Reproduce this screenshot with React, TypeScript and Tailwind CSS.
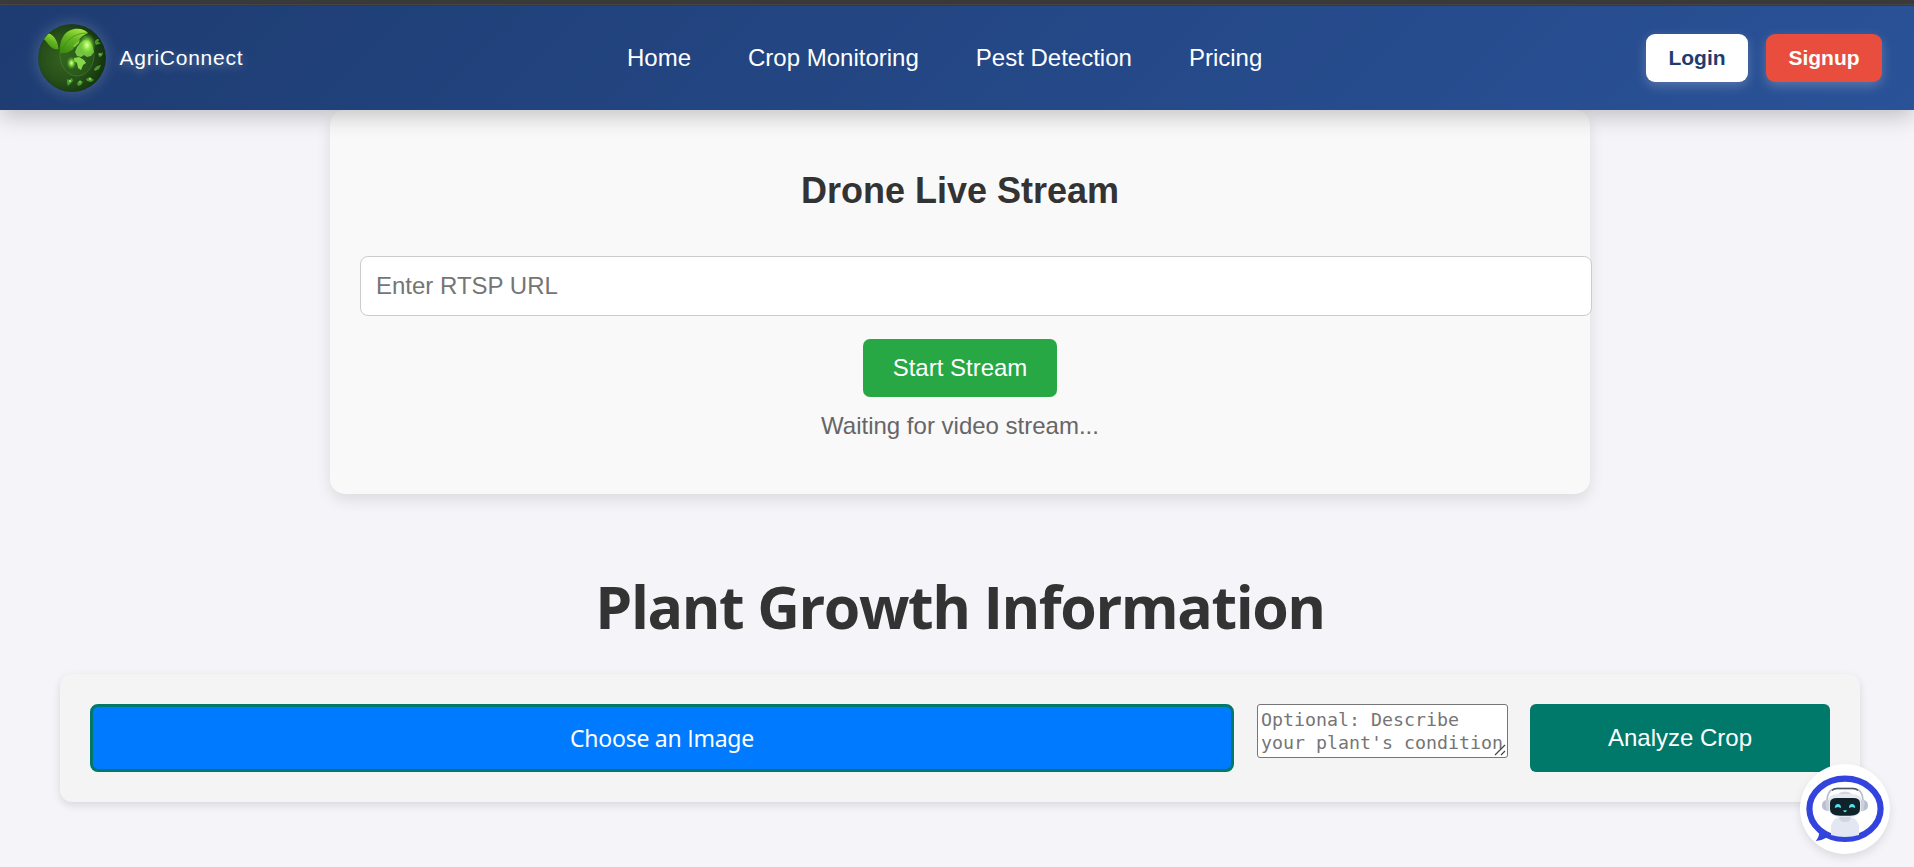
const navLinks = ["Home", "Crop Monitoring", "Pest Detection", "Pricing"];

function Logo() {
  return (
    <svg viewBox="0 0 68 68" className="size-[68px] rounded-full shadow-[0_0_15px_rgba(255,255,255,0.22)]">
      <defs>
        <radialGradient id="globe-bg" cx="40%" cy="50%" r="62%">
          <stop offset="0" stopColor="#366320" />
          <stop offset="0.55" stopColor="#27501a" />
          <stop offset="1" stopColor="#12300c" />
        </radialGradient>
        <linearGradient id="leaf" x1="0.2" y1="1" x2="0.7" y2="0">
          <stop offset="0" stopColor="#3f8a12" />
          <stop offset="0.55" stopColor="#63b520" />
          <stop offset="1" stopColor="#a2e444" />
        </linearGradient>
        <radialGradient id="glow">
          <stop offset="0" stopColor="#f0ffb0" />
          <stop offset="0.35" stopColor="#98f04c" stopOpacity="0.85" />
          <stop offset="1" stopColor="#4fb020" stopOpacity="0" />
        </radialGradient>
        <clipPath id="disc"><circle cx="34" cy="34" r="34" /></clipPath>
      </defs>
      <g clipPath="url(#disc)">
        <rect width="68" height="68" fill="url(#globe-bg)" />
        <ellipse cx="39" cy="31" rx="17" ry="21" fill="#2f681c" fillOpacity="0.35" stroke="#4f8a35" strokeWidth="0.9" strokeOpacity="0.6" />
        <path d="M5 14C7 9 11 8 15 12C19 16 20 21 20.5 25C14 27 11 20 5 14Z" fill="url(#leaf)" />
        <path d="M22 29C21 18 25 7 36 5C43 4 47 6 50 9C43 12 41 15 38 21C35 27 29 30 22 29Z" fill="url(#leaf)" />
        <path d="M23 28C28 17 35 9 49 9" stroke="#3f8d15" strokeWidth="0.7" fill="none" />
        <path d="M39 23l3-4 4-3 5 1 3 4 2 7-3 4-4 1-3-2-3 2-4-1-2-4z" fill="#8ade4b" fillOpacity="0.8" />
        <path d="M36 34l5-1 5 3 2 3-3 2-2 5-3-2-1-5-3-2z" fill="#86d84b" />
        <path d="M39 18l3-3-1 4-4 4-2-1z" fill="#7acb43" />
        <ellipse cx="49" cy="21" rx="9" ry="12" fill="url(#glow)" />
        <ellipse cx="33.5" cy="39" rx="5" ry="6.5" fill="url(#glow)" />
        <g fill="#57b434" fillOpacity="0.75">
          <path d="M57 17l2-2 1 3 3 1-2 1-3 1-1-2zM60 29l2 1 3-2-1 4-3 1zM56 45l3-3 4-1-2 4-4 2z" />
          <path d="M29 55l2 1 3-2 1 3-3 3-2 2-1-3zM39 59l3-3 3 2-2 3-3 1zM48 55l4-2 4 3-3 2-4-1z" />
        </g>
        <g fill="#a0ed69">
          <circle cx="60" cy="16" r="0.7" /><circle cx="62" cy="30" r="0.8" /><circle cx="32" cy="57" r="1" /><circle cx="42" cy="58" r="0.8" /><circle cx="52" cy="55" r="0.9" />
        </g>
      </g>
    </svg>
  );
}

function RobotIcon() {
  return (
    <svg viewBox="0 0 90 90" className="size-[90px]">
      <path d="M19 66Q20 72 15.8 77Q22 76.500 28 73Z" fill="#3343dd" />
      <ellipse cx="45" cy="44.800" rx="35.600" ry="30.100" fill="#fff" stroke="#3343dd" strokeWidth="6.200" />
      <path d="M31 71V64Q31 54 41 53H49Q59 54 59 64V71Q45 75 31 71Z" fill="#e3e7f1" />
      <path d="M39 52H51Q51 58 45 58Q39 58 39 52Z" fill="#cfd5e1" />
      <path d="M27.500 40Q27 30 38 30Q40 27.500 45 27.500Q50 27.500 52 30Q63 30 62.500 40Q62 51 53 53H37Q28 51 27.500 40Z" fill="#e6e9f2" />
      <path d="M39 30Q41 27.800 45 27.800Q49 27.800 51 30Z" fill="#d1d6e1" />
      <path d="M27 38Q27 24.500 37 24.500H53Q63 24.500 63 38" fill="none" stroke="#b4bdca" strokeWidth="1.600" />
      <path d="M32 26.500Q34 24.500 37 24.500H53Q56 24.500 58 26.500" fill="none" stroke="#4a5863" strokeWidth="1.300" />
      <path d="M27.500 36Q22 36 22 41.500Q22 46 27.500 47Z" fill="#b9bfd0" />
      <path d="M62.500 36Q68 36 68 41.500Q68 46 62.500 47Z" fill="#b9bfd0" />
      <path d="M25.500 36H29V47H27Q25.500 44 25.500 36ZM64.500 36H61V47H63Q64.500 44 64.500 36Z" fill="#cbd1dd" />
      <path d="M30 39Q30 34 37 34H53Q60 34 60 39V45Q60 51.500 50 51.800H40Q30 51.500 30 45Z" fill="#10232b" />
      <path d="M34.800 44Q35 40 38 40Q41 40 41 44L38 43ZM49 44Q49 40 52 40Q55 40 55.200 44L52 43Z" fill="#59e1ed" />
      <path d="M43.200 46.300H46.800Q46.500 48.300 45 48.300Q43.500 48.300 43.200 46.300Z" fill="#59e1ed" />
    </svg>
  );
}

export default function App() {
  return (
    <div className="flex h-[867px] w-full flex-col overflow-hidden bg-[#f4f4f9] font-['Liberation_Sans',Arial,sans-serif]">
      <div className="h-1.5 shrink-0 bg-[#3c3c3c] pt-1">
        <div className="h-px bg-[#494949]" />
      </div>
      <header className="relative z-10 grid h-[104px] shrink-0 grid-cols-[627px_1fr_auto] items-center bg-linear-135 from-[#1e3c72] to-[#2a5298] pr-8 shadow-[0_6px_22px_rgba(0,0,0,0.22)]">
        <div className="flex items-center gap-[14px] pl-[37.500px]">
          <Logo />
          <span className="pb-0.5 text-[21px] leading-none tracking-[0.75px] text-white [text-shadow:0_3px_8px_rgba(255,255,255,0.3)]">AgriConnect</span>
        </div>
        <nav className="flex items-center gap-[57px] text-2xl leading-none whitespace-nowrap text-white">
          {navLinks.map((label) => (
            <a key={label} href="#">{label}</a>
          ))}
        </nav>
        <div className="flex gap-[18px] text-[21px] font-bold">
          <button className="h-12 w-[102px] rounded-[9px] bg-white text-[#1e3c72] shadow-[0_4px_12px_rgba(255,255,255,0.22)]">Login</button>
          <button className="h-12 w-[116px] rounded-[9px] bg-[#e94d3d] text-white shadow-[0_4px_12px_rgba(255,255,255,0.22)]">Signup</button>
        </div>
      </header>

      <main className="flex flex-col">
        <section className="ml-[330px] flex h-[384px] w-[1260px] flex-col items-center rounded-[15px] bg-[#f9f9f9] px-[30px] pt-[61px] shadow-[0_6px_15px_rgba(0,0,0,0.1)]">
          <h2 className="text-4xl leading-10 font-bold text-[#333]">Drone Live Stream</h2>
          <input
            type="text"
            placeholder="Enter RTSP URL"
            className="mt-[45px] h-[60px] w-[1232px] shrink-0 self-start rounded-[8px] border border-[#ccc] bg-white px-[15px] text-2xl placeholder:text-[#757575]"
          />
          <button className="mt-[23px] h-[58px] w-[194px] rounded-[7px] bg-[#28a745] text-2xl text-white">Start Stream</button>
          <p className="mt-[15px] text-2xl leading-7 text-[#666]">Waiting for video stream...</p>
        </section>

        <h1 className="mt-[72px] w-[1920px] text-center font-['Open_Sans',sans-serif] text-[59px] leading-[80px] font-bold tracking-[-1.430px] text-[#333]">
          Plant Growth Information
        </h1>

        <section className="mt-7 ml-[60px] flex h-32 w-[1800px] items-start rounded-[12px] bg-[#f4f4f4] p-[30px] shadow-[0_3px_9px_rgba(0,0,0,0.12)]">
          <label className="flex h-[68px] w-[1144px] items-center justify-center rounded-[8px] border-3 border-[#00796b] bg-[#007bff] font-['Noto_Sans',sans-serif] text-[23px] tracking-[-0.250px] text-white">
            <span>Choose an <span className="font-['Open_Sans',sans-serif]">I</span>mage</span>
          </label>
          <div className="relative ml-[23px] h-[54px] w-[251px]">
            <textarea
              placeholder="Optional: Describe your plant's condition"
              className="block h-[54px] w-[251px] resize-none overflow-hidden rounded-[3px] border border-[#767676] bg-white px-[3px] py-[3px] font-['DejaVu_Sans_Mono',monospace] text-[18.270px] leading-[23px] placeholder:text-[#757575]"
            />
            <svg viewBox="0 0 12 12" className="absolute right-[2px] bottom-[2px] size-3" stroke="#444" strokeWidth="1.200">
              <path d="M1 11L11 1M7 11L11 7" />
            </svg>
          </div>
          <button className="ml-[22px] h-[68px] w-[300px] rounded-[6px] bg-[#00796b] text-2xl text-white">Analyze Crop</button>
        </section>
      </main>

      <button aria-label="Open chat" className="absolute top-[764px] left-[1800px] size-[90px] rounded-full bg-white shadow-[0_4px_10px_rgba(0,0,0,0.1)]">
        <RobotIcon />
      </button>
    </div>
  );
}
